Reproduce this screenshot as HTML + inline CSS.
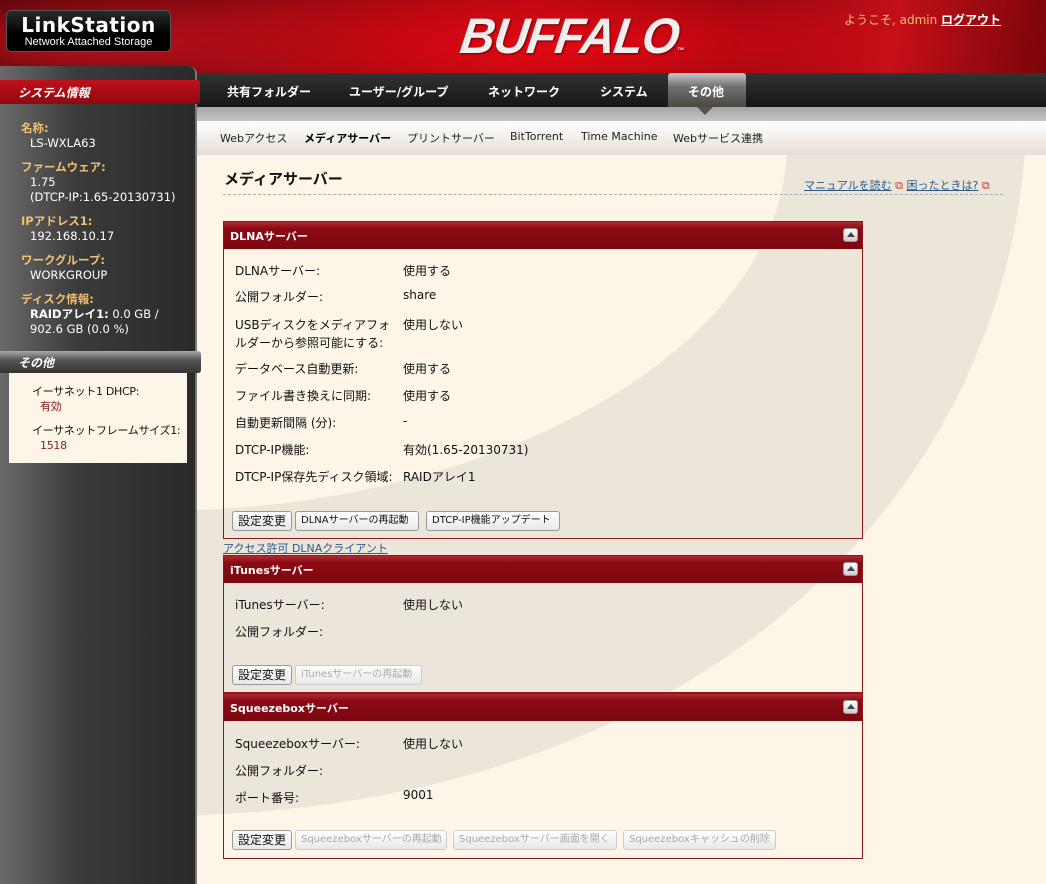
<!DOCTYPE html>
<html><head><meta charset="utf-8"><style>
*{margin:0;padding:0;box-sizing:border-box}
body{width:1046px;height:884px;overflow:hidden;position:relative;font-family:Verdana,"DejaVu Sans","Noto Sans CJK JP",sans-serif;font-size:12px;background:#fdf6e8;color:#111}
.abs{position:absolute;white-space:nowrap}
#hdr{left:0;top:0;width:1046px;height:76px;background:radial-gradient(ellipse 300px 60px at 90px 40px,#c0101a,transparent),radial-gradient(ellipse 420px 70px at 560px 45px,#e00812,transparent),linear-gradient(100deg,#3a0306 0%,#8a0810 25%,#b00a12 50%,#8a0610 70%,#c0101a 85%,#7a0508 100%)}
#logo{left:6px;top:10px;width:165px;height:42px;background:linear-gradient(#2a2a2a,#000 60%);border:1px solid #555;border-radius:5px;color:#fff;text-align:center}
#logo b{display:block;font-family:"DejaVu Sans",sans-serif;font-size:20px;line-height:22px;margin-top:3px;letter-spacing:.5px}
#logo span{display:block;font-size:11px;line-height:13px;font-family:"Liberation Sans",sans-serif}
#buf{left:460px;top:8px;font:italic bold 50px/56px "Liberation Sans",sans-serif;color:#eee;letter-spacing:-1px;transform:skewX(-8deg) scaleX(.95);transform-origin:left;text-shadow:1px 1px 2px #600}
#welcome{left:844px;top:11px;color:#f0c070;font-size:12px}
#welcome u{color:#fff;font-weight:bold}
#side{left:0;top:66px;width:197px;height:818px;background:linear-gradient(90deg,#6a6a6a 0%,#3a3a3a 40%,#2a2a2a 100%);border-radius:0 8px 0 0;border-right:2px solid #777}
#nav{left:197px;top:73px;width:849px;height:35px;background:linear-gradient(#333,#151515)}
#nav span{position:absolute;top:10px;color:#fff;font-weight:bold;font-size:12px}
#tabsel{left:668px;top:73px;width:78px;height:35px;background:linear-gradient(#c8c8c8,#707070 40%,#4a4640);border-radius:3px 3px 0 0}
#strip{left:197px;top:107px;width:849px;height:14px;background:linear-gradient(#a5a5a5,#c5c5c5)}
#sub{left:197px;top:121px;width:849px;height:34px;background:linear-gradient(#fff,#e6ded6)}
#sub span{position:absolute;top:9px;font-size:11px;color:#222}
.sh{color:#f0c070;font-weight:bold;font-size:11.5px}
.sv{color:#fff;font-size:11.5px;padding-left:9px;line-height:15px}
.box{position:absolute;left:223px;width:640px;border:1px solid #8a1a1a}
.bh{height:27px;background:linear-gradient(#b02a30,#8a0a14 25%,#7e0810);color:#fff;font-weight:bold;font-size:11px;padding:6px 0 0 6px;position:relative}
.bh i{position:absolute;right:4px;top:6px;width:15px;height:14px;background:linear-gradient(#fff,#ccc);border-radius:3px;border:1px solid #999}
.bh i:after{content:"";position:absolute;left:3px;top:3px;border:4px solid transparent;border-bottom:5px solid #444;border-top:0}
.r{position:absolute;left:11px;font-size:12px;white-space:nowrap}
.v{position:absolute;left:179px;font-size:12px}
.btn{position:absolute;height:20px;border:1px solid #999;border-radius:3px;background:linear-gradient(#fff,#e8e8e8);font-size:10px;line-height:18px;padding:0 5px;color:#111;white-space:nowrap}
.btn.d{color:#aaa;border-color:#ccc}
.btn.b{font-size:12px}
a{color:#2a5a8a}
</style></head><body>
<svg class="abs" style="left:0;top:0" width="1046" height="884"><path d="M787,150 C780,350 500,500 196,510 L196,815 C700,800 1000,500 1025,150 Z" fill="#ebe5da"/></svg>
<div id="hdr" class="abs"></div>
<div id="logo" class="abs"><b>LinkStation</b><span>Network Attached Storage</span></div>
<div id="buf" class="abs">BUFFALO<span style="font-size:8px">™</span></div>
<div id="welcome" class="abs">ようこそ, admin <u>ログアウト</u></div>
<div id="side" class="abs"></div>
<div id="nav" class="abs"><span style="left:30px">共有フォルダー</span><span style="left:152px">ユーザー/グループ</span><span style="left:291px">ネットワーク</span><span style="left:403px">システム</span></div>
<div id="tabsel" class="abs"><span style="position:absolute;left:20px;top:10px;color:#fff;font-weight:bold">その他</span></div>
<div id="strip" class="abs"></div>
<div class="abs" style="left:697px;top:107px;border:8px solid transparent;border-top:8px solid #555;border-bottom:0"></div>
<div id="sub" class="abs"><span style="left:23px">Webアクセス</span><span style="left:107px;font-weight:bold;color:#000">メディアサーバー</span><span style="left:210px">プリントサーバー</span><span style="left:313px">BitTorrent</span><span style="left:384px">Time Machine</span><span style="left:476px">Webサービス連携</span></div>
<div class="abs" style="left:0;top:80px;width:200px;height:24px;background:linear-gradient(#c0101a,#900810);border-radius:0 3px 3px 0"><span style="position:absolute;left:18px;top:4px;color:#fff;font-weight:bold;font-style:italic">システム情報</span></div>
<div class="abs" style="left:21px;top:121px;line-height:15px">
<div class="sh">名称:</div><div class="sv">LS-WXLA63</div>
<div class="sh" style="margin-top:9px">ファームウェア:</div><div class="sv">1.75<br>(DTCP-IP:1.65-20130731)</div>
<div class="sh" style="margin-top:9px">IPアドレス1:</div><div class="sv">192.168.10.17</div>
<div class="sh" style="margin-top:9px">ワークグループ:</div><div class="sv">WORKGROUP</div>
<div class="sh" style="margin-top:9px">ディスク情報:</div><div class="sv"><b>RAIDアレイ1:</b> 0.0 GB /<br>902.6 GB (0.0 %)</div>
</div>
<div class="abs" style="left:0;top:351px;width:201px;height:22px;background:linear-gradient(#aaa,#555 40%,#333);border-radius:0 3px 3px 0"><span style="position:absolute;left:18px;top:3px;color:#fff;font-weight:bold;font-style:italic">その他</span></div>
<div class="abs" style="left:9px;top:373px;width:178px;height:90px;background:#fdf6e8;padding:11px 0 0 23px;line-height:15px;font-size:11px;letter-spacing:-.3px;overflow:hidden">
<div>イーサネット1 DHCP:</div><div style="color:#8a1a1a;padding-left:8px">有効</div>
<div style="margin-top:9px">イーサネットフレームサイズ1:</div><div style="color:#8a1a1a;padding-left:8px">1518</div></div>
<div class="abs" style="left:224px;top:168px;font-size:15px;font-weight:bold">メディアサーバー</div>
<div class="abs" style="left:804px;top:177px;font-size:11px"><a><u>マニュアルを読む</u></a> <span style="color:#c33">⧉</span> <a><u>困ったときは?</u></a> <span style="color:#c33">⧉</span></div>
<div class="abs" style="left:223px;top:194px;width:780px;border-top:1px dashed #aaa"></div>

<div class="box" style="top:221px;height:318px"><div class="bh">DLNAサーバー<i></i></div>
<div class="r" style="top:40px">DLNAサーバー:</div><div class="v" style="top:40px">使用する</div>
<div class="r" style="top:66px">公開フォルダー:</div><div class="v" style="top:66px">share</div>
<div class="r" style="top:94px;line-height:18px">USBディスクをメディアフォ<br>ルダーから参照可能にする:</div><div class="v" style="top:94px">使用しない</div>
<div class="r" style="top:138px">データベース自動更新:</div><div class="v" style="top:138px">使用する</div>
<div class="r" style="top:165px">ファイル書き換えに同期:</div><div class="v" style="top:165px">使用する</div>
<div class="r" style="top:192px">自動更新間隔 (分):</div><div class="v" style="top:192px">-</div>
<div class="r" style="top:219px">DTCP-IP機能:</div><div class="v" style="top:219px">有効(1.65-20130731)</div>
<div class="r" style="top:246px">DTCP-IP保存先ディスク領域:</div><div class="v" style="top:246px">RAIDアレイ1</div>
<div class="btn b" style="left:8px;top:289px">設定変更</div><div class="btn" style="left:71px;top:289px;width:124px">DLNAサーバーの再起動</div><div class="btn" style="left:202px;top:289px;width:134px">DTCP-IP機能アップデート</div>
</div>
<div class="abs" style="left:223px;top:540px;font-size:11px"><a><u>アクセス許可 DLNAクライアント</u></a></div>
<div class="box" style="top:555px;height:138px"><div class="bh">iTunesサーバー<i></i></div>
<div class="r" style="top:40px">iTunesサーバー:</div><div class="v" style="top:40px">使用しない</div>
<div class="r" style="top:67px">公開フォルダー:</div>
<div class="btn b" style="left:8px;top:109px">設定変更</div><div class="btn d" style="left:71px;top:109px;width:127px">iTunesサーバーの再起動</div>
</div>
<div class="box" style="top:693px;height:166px"><div class="bh">Squeezeboxサーバー<i></i></div>
<div class="r" style="top:41px">Squeezeboxサーバー:</div><div class="v" style="top:41px">使用しない</div>
<div class="r" style="top:68px">公開フォルダー:</div>
<div class="r" style="top:95px">ポート番号:</div><div class="v" style="top:94px">9001</div>
<div class="btn b" style="left:8px;top:136px">設定変更</div><div class="btn d" style="left:71px;top:136px;width:152px">Squeezeboxサーバーの再起動</div><div class="btn d" style="left:229px;top:136px;width:164px">Squeezeboxサーバー画面を開く</div><div class="btn d" style="left:399px;top:136px;width:153px">Squeezeboxキャッシュの削除</div>
</div>
</body></html>
